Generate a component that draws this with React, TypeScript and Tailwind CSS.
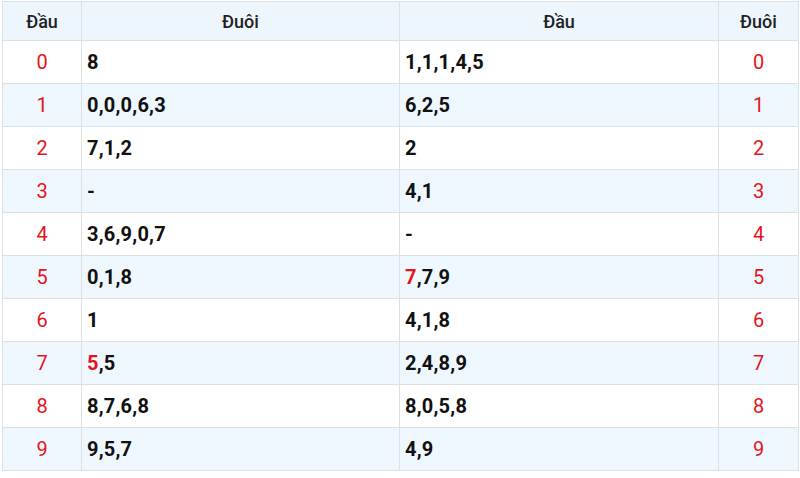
import React from "react";

const rows: { d: string; a: React.ReactNode; b: React.ReactNode }[] = [
  { d: "0", a: "8", b: "1,1,1,4,5" },
  { d: "1", a: "0,0,0,6,3", b: "6,2,5" },
  { d: "2", a: "7,1,2", b: "2" },
  { d: "3", a: "-", b: "4,1" },
  { d: "4", a: "3,6,9,0,7", b: "-" },
  { d: "5", a: "0,1,8", b: (<><span className="text-[#e3151c]">7</span>,7,9</>) },
  { d: "6", a: "1", b: "4,1,8" },
  { d: "7", a: (<><span className="text-[#e3151c]">5</span>,5</>), b: "2,4,8,9" },
  { d: "8", a: "8,7,6,8", b: "8,0,5,8" },
  { d: "9", a: "9,5,7", b: "4,9" },
];

export default function App() {
  return (
    <div className="w-[800px] h-[478px] bg-white pt-[1px] px-[2px]" style={{ fontFamily: "Roboto, 'Liberation Sans', sans-serif" }}>
      <table className="w-[796px] table-fixed border-collapse border border-[#dde1e6]">
        <colgroup>
          <col className="w-[79px]" />
          <col className="w-[318px]" />
          <col className="w-[319px]" />
          <col className="w-[80px]" />
        </colgroup>
        <thead>
          <tr className="h-[39px] bg-[#eef6fd]">
            <th className="border border-[#dde1e6] text-center font-medium text-[18px] text-[#222]">Đầu</th>
            <th className="border border-[#dde1e6] text-center font-medium text-[18px] text-[#222]">Đuôi</th>
            <th className="border border-[#dde1e6] text-center font-medium text-[18px] text-[#222]">Đầu</th>
            <th className="border border-[#dde1e6] text-center font-medium text-[18px] text-[#222]">Đuôi</th>
          </tr>
        </thead>
        <tbody>
          {rows.map((r, i) => (
            <tr key={r.d} className={`h-[43px] ${i % 2 === 1 ? "bg-[#eff7fe]" : "bg-white"}`}>
              <td className="border border-[#dde1e6] text-center text-[20px] text-[#e3151c]">{r.d}</td>
              <td className="border border-[#dde1e6] pl-[5px] text-[20px] tracking-[0.2px] font-bold text-[#111]">{r.a}</td>
              <td className="border border-[#dde1e6] pl-[5px] text-[20px] tracking-[0.2px] font-bold text-[#111]">{r.b}</td>
              <td className="border border-[#dde1e6] text-center text-[20px] text-[#e3151c]">{r.d}</td>
            </tr>
          ))}
        </tbody>
      </table>
    </div>
  );
}
